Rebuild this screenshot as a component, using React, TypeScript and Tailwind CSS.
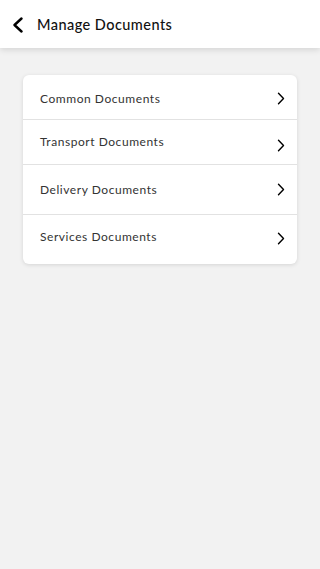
const ROWS = [
  { label: 'Common Documents', h: 'h-[45px]', text: 'mt-[3px]', chev: 'mt-[2px]' },
  { label: 'Transport Documents', h: 'h-[45px]', text: 'mt-[-1px]', chev: 'mt-[6px]' },
  { label: 'Delivery Documents', h: 'h-[50px]', text: 'mt-[1px]', chev: 'mt-0' },
  { label: 'Services Documents', h: 'h-[49px]', text: 'mt-[-5px]', chev: 'mt-[-2px]' },
];

function Chevron({ className }: { className?: string }) {
  return (
    <svg width="8" height="13" viewBox="0 0 8 13" fill="none" className={className}>
      <path d="M1.5 1.2 L6.5 6.5 L1.5 11.8" stroke="#000" strokeWidth="1.4" strokeLinecap="round" strokeLinejoin="round" />
    </svg>
  );
}

export default function App() {
  return (
    <div className="min-h-[569px] w-[320px] bg-[#f2f2f2] font-['Lato',sans-serif]">
      {/* Header */}
      <div className="flex h-[48px] items-center bg-white shadow-[0_2px_6px_rgba(0,0,0,0.12)]">
        <svg width="12" height="16" viewBox="0 0 12 16" fill="none" className="ml-[12px] mt-[2px]">
          <path d="M9.5 1.5 L2.5 8 L9.5 14.5" stroke="#000" strokeWidth="2.4" strokeLinecap="round" strokeLinejoin="round" />
        </svg>
        <h1 className="ml-[13px] mt-[2px] text-[14.5px] font-medium tracking-[0.45px] text-[#111]">Manage Documents</h1>
      </div>

      {/* Document list */}
      <div className="mx-[23px] mt-[27px] overflow-hidden rounded-[6px] bg-white shadow-[0_1px_4px_rgba(0,0,0,0.12)]">
        {ROWS.map((row, i) => (
          <div
            key={row.label}
            className={`flex items-center justify-between pl-[17px] pr-[12px] ${row.h} ${
              i < ROWS.length - 1 ? 'border-b border-[#e2e2e2]' : ''
            }`}
          >
            <span className={`text-[12px] font-normal tracking-[0.55px] text-[#333] ${row.text}`}>{row.label}</span>
            <Chevron className={row.chev} />
          </div>
        ))}
      </div>
    </div>
  );
}
